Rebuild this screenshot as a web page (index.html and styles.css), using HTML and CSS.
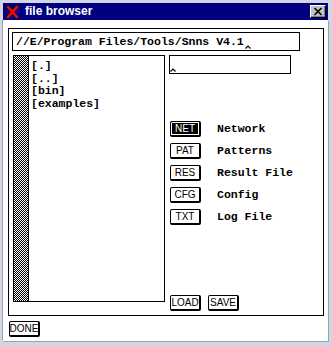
FILE: index.html
```html
<!DOCTYPE html>
<html>
<head>
<meta charset="utf-8">
<link rel="stylesheet" href="styles.css">
</head>
<body>
<div class="window">
  <div class="titlebar">
    <svg class="app-icon" width="13" height="14" viewBox="0 0 13 14">
      <path d="M2 2 L11 12 M11 2 L2 12" stroke="#600000" stroke-width="3.4" stroke-linecap="round" fill="none"/>
      <path d="M2 2 L11 12 M11 2 L2 12" stroke="#e81010" stroke-width="2" stroke-linecap="round" fill="none"/>
    </svg>
    <span class="title">file browser</span>
    <div class="close-btn">
      <svg width="10" height="9" viewBox="0 0 10 9">
        <path d="M1.5 1 L8.5 8 M8.5 1 L1.5 8" stroke="#000" stroke-width="1.6" fill="none"/>
      </svg>
    </div>
  </div>
  <div class="client">
    <div class="panel">
      <div class="path-field">
        <span class="field-text">//E/Program Files/Tools/Snns V4.1</span><svg class="caret" width="6" height="4" viewBox="0 0 6 4"><path d="M0.5 3.5 L3 1 L5.5 3.5" stroke="#000" stroke-width="1.2" fill="none"/></svg>
      </div>
      <div class="main">
        <div class="file-list">
          <div class="scrollbar"></div>
          <ul class="entries">
            <li>[.]</li>
            <li>[..]</li>
            <li>[bin]</li>
            <li>[examples]</li>
          </ul>
        </div>
        <div class="side">
          <div class="name-field">
            <svg class="caret" width="6" height="4" viewBox="0 0 6 4"><path d="M0.5 3.5 L3 1 L5.5 3.5" stroke="#000" stroke-width="1.2" fill="none"/></svg>
          </div>
          <div class="types">
            <div class="type-row"><button class="btn selected">NET</button><span class="type-label">Network</span></div>
            <div class="type-row"><button class="btn">PAT</button><span class="type-label">Patterns</span></div>
            <div class="type-row"><button class="btn">RES</button><span class="type-label">Result File</span></div>
            <div class="type-row"><button class="btn">CFG</button><span class="type-label">Config</span></div>
            <div class="type-row"><button class="btn">TXT</button><span class="type-label">Log File</span></div>
          </div>
          <div class="actions">
            <button class="btn">LOAD</button>
            <button class="btn">SAVE</button>
          </div>
        </div>
      </div>
    </div>
    <div class="footer">
      <button class="btn">DONE</button>
    </div>
  </div>
</div>
</body>
</html>
```

FILE: styles.css
```css
html, body {
  margin: 0;
  padding: 0;
}

body {
  width: 332px;
  height: 346px;
  background: #cdd2de;
  overflow: hidden;
}

.window {
  box-sizing: border-box;
  width: 332px;
  height: 346px;
  padding: 3px 4px 5px 3px;
  display: flex;
  flex-direction: column;
  background: #d3d7e2;
}

.titlebar {
  height: 17px;
  flex: none;
  background: #000080;
  display: flex;
  align-items: center;
}

.app-icon {
  margin-left: 3px;
  display: block;
}

.title {
  margin-left: 6px;
  color: #fff;
  font-family: "Liberation Sans", Arial, sans-serif;
  font-weight: bold;
  font-size: 12px;
  line-height: 17px;
}

.close-btn {
  margin-left: auto;
  margin-right: 2px;
  width: 16px;
  height: 13px;
  box-sizing: border-box;
  background: #c0c0c0;
  border-top: 1px solid #fff;
  border-left: 1px solid #fff;
  border-right: 1px solid #000;
  border-bottom: 1px solid #000;
  box-shadow: inset -1px -1px 0 #808080;
  display: flex;
  align-items: center;
  justify-content: center;
}

.close-btn svg {
  display: block;
}

.client {
  flex: 1;
  background: #fff;
  display: flex;
  flex-direction: column;
  padding-left: 5px;
  box-shadow: -1px 0 0 #9aa0ae, 1px 1px 0 #9aa0ae;
}

.panel {
  box-sizing: border-box;
  margin-top: 8px;
  width: 316px;
  height: 288px;
  border: 1px solid #000;
  padding: 3px 0 0 3px;
  display: flex;
  flex-direction: column;
}

.path-field {
  box-sizing: border-box;
  width: 288px;
  height: 19px;
  border: 1px solid #000;
  padding-left: 3px;
  display: flex;
  align-items: center;
}

.field-text,
.entries,
.type-label {
  font-family: "Liberation Mono", "DejaVu Sans Mono", monospace;
  font-weight: bold;
  font-size: 11.5px;
  color: #000;
}

.path-field .caret {
  align-self: flex-end;
  margin-bottom: 1px;
  margin-left: 1px;
}

.caret {
  display: block;
}

.main {
  flex: 1;
  display: flex;
  margin-top: 4px;
  margin-left: 1px;
}

.file-list {
  box-sizing: border-box;
  width: 152px;
  border: 1px solid #000;
  margin-bottom: 13px;
  display: flex;
}

.scrollbar {
  width: 14px;
  border-right: 1px solid #000;
  background-color: #fff;
  background-image: conic-gradient(#000 25%, #fff 0 50%, #000 0 75%, #fff 0);
  background-size: 2px 2px;
}

.entries {
  list-style: none;
  margin: 0;
  padding: 4px 0 0 2px;
  line-height: 12.5px;
}

.side {
  flex: 1;
  margin-left: 4px;
  display: flex;
  flex-direction: column;
  padding-bottom: 4px;
}

.name-field {
  box-sizing: border-box;
  width: 122px;
  height: 19px;
  border: 1px solid #000;
  display: flex;
  align-items: flex-end;
  padding: 0 0 1px 0;
}

.types {
  margin-top: 47px;
  margin-left: 1px;
  display: flex;
  flex-direction: column;
  gap: 6px;
}

.type-row {
  display: flex;
  align-items: center;
  gap: 16px;
}

.type-label {
  line-height: 16px;
}

.btn {
  box-sizing: border-box;
  width: 31px;
  height: 16px;
  padding: 0;
  margin: 0;
  border: 1px solid #000;
  border-right-width: 2px;
  border-bottom-width: 2px;
  border-radius: 2px;
  background: #fff;
  color: #000;
  font-family: "Liberation Sans", Arial, sans-serif;
  font-size: 10px;
  line-height: 12px;
  text-align: center;
  display: flex;
  align-items: center;
  justify-content: center;
}

.btn.selected {
  background: #000;
  color: #fff;
  box-shadow: inset 0 0 0 1px #fff;
  border-color: #000;
}

.actions {
  margin-top: auto;
  margin-left: 1px;
  display: flex;
  gap: 7px;
}

.footer {
  margin-top: 5px;
  margin-left: 1px;
  display: flex;
}
```
